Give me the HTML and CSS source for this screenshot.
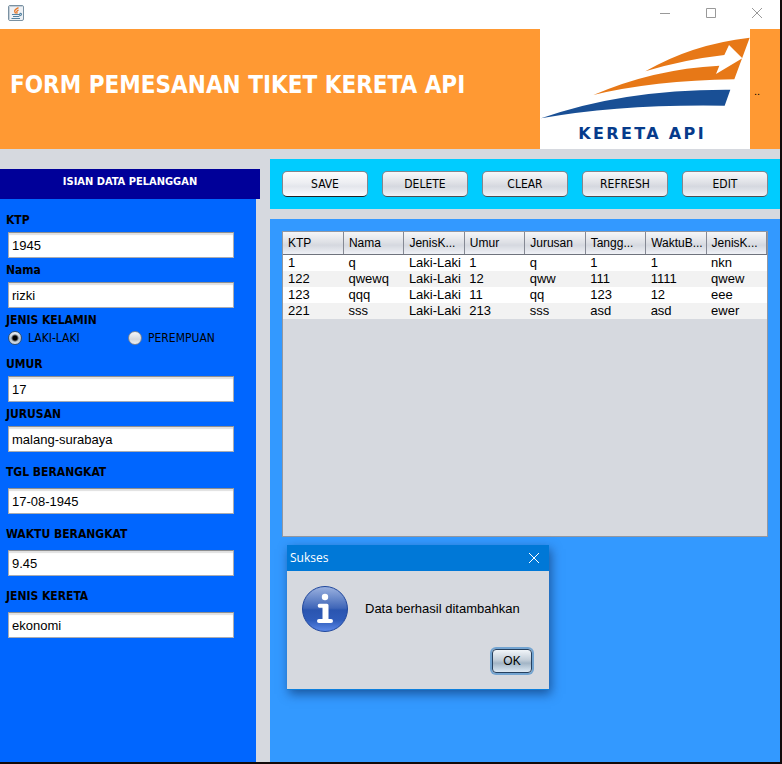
FILE: index.html
```html
<!DOCTYPE html>
<html lang="id">
<head>
<meta charset="utf-8">
<title>Form Pemesanan Tiket Kereta Api</title>
<link rel="stylesheet" href="styles.css">
</head>
<body>
<div class="window">
  <div class="titlebar">
    <svg class="java-icon" viewBox="0 0 16 16" aria-hidden="true">
      <rect x=".5" y=".5" width="15" height="15" rx="1.5" fill="#eef1f5" stroke="#7a91a2"/>
      <path d="M1.500 14V1.500h12.500" fill="none" stroke="#c3ced8"/>
      <path d="M10.500 2.600Q6 5 6.800 6.600Q7.400 7.600 7.400 8.400M10.600 5.200Q8.200 6 8.900 7.200Q9.200 7.800 8.600 8.600" fill="none" stroke="#e8792b" stroke-width="1.4"/>
      <path d="M4 9.500h8M5 11.500h6M3.500 13.500h8.500M11.500 8.600q2-.6 2 .6t-2.500 1.800" fill="none" stroke="#5382a1" stroke-width="1.2"/>
    </svg>
    <div class="window-controls">
      <button class="win-btn" type="button" aria-label="Minimize"><svg viewBox="0 0 10 10"><path d="M0 5.500h10"/></svg></button>
      <button class="win-btn" type="button" aria-label="Maximize"><svg viewBox="0 0 10 10"><path d="M.5.5h9v9h-9z"/></svg></button>
      <button class="win-btn" type="button" aria-label="Close"><svg viewBox="0 0 10 10"><path d="M0 0l10 10M10 0L0 10"/></svg></button>
    </div>
  </div>

  <header class="banner">
    <h1>FORM PEMESANAN TIKET KERETA API</h1>
    <svg class="logo" viewBox="0 0 630 360" role="img" aria-label="Kereta Api">
      <path fill="#e77817" d="M316 127Q455 46 629 26L583 151Q340 155 160 198Q340 120 538 110L528 135L607 88L567 48L553 78Q430 92 316 127Z"/>
      <path fill="#194f95" d="M3 268Q250 180 571 182L554 230Q240 225 3 268Z"/>
      <text class="logo-text" x="115" y="330">KERETA API</text>
    </svg>
    <span class="dots">..</span>
  </header>

  <main class="content">
    <section class="sidebar">
      <h2>ISIAN DATA PELANGGAN</h2>
      <form class="form">
        <div class="field"><label for="ktp">KTP</label><input id="ktp" type="text" value="1945"></div>
        <div class="field"><label for="nama">Nama</label><input id="nama" type="text" value="rizki"></div>
        <fieldset>
          <legend>JENIS KELAMIN</legend>
          <div class="radios">
            <label><input type="radio" name="jk" checked>LAKI-LAKI</label>
            <label><input type="radio" name="jk">PEREMPUAN</label>
          </div>
        </fieldset>
        <div class="field after-radios"><label for="umur">UMUR</label><input id="umur" type="text" value="17"></div>
        <div class="field"><label for="jurusan">JURUSAN</label><input id="jurusan" type="text" value="malang-surabaya"></div>
        <div class="field roomy"><label for="tgl">TGL BERANGKAT</label><input id="tgl" type="text" value="17-08-1945"></div>
        <div class="field roomy"><label for="waktu">WAKTU BERANGKAT</label><input id="waktu" type="text" value="9.45"></div>
        <div class="field roomy"><label for="kereta">JENIS KERETA</label><input id="kereta" type="text" value="ekonomi"></div>
      </form>
    </section>

    <div class="workspace">
      <div class="toolbar">
        <button class="btn hover" type="button">SAVE</button>
        <button class="btn" type="button">DELETE</button>
        <button class="btn" type="button">CLEAR</button>
        <button class="btn" type="button">REFRESH</button>
        <button class="btn" type="button">EDIT</button>
      </div>
      <section class="data-panel">
        <div class="table-frame">
          <table>
            <thead>
              <tr><th>KTP</th><th>Nama</th><th>JenisK...</th><th>Umur</th><th>Jurusan</th><th>Tangg...</th><th>WaktuB...</th><th>JenisK...</th></tr>
            </thead>
            <tbody>
              <tr><td>1</td><td>q</td><td>Laki-Laki</td><td>1</td><td>q</td><td>1</td><td>1</td><td>nkn</td></tr>
              <tr><td>122</td><td>qwewq</td><td>Laki-Laki</td><td>12</td><td>qww</td><td>111</td><td>1111</td><td>qwew</td></tr>
              <tr><td>123</td><td>qqq</td><td>Laki-Laki</td><td>11</td><td>qq</td><td>123</td><td>12</td><td>eee</td></tr>
              <tr><td>221</td><td>sss</td><td>Laki-Laki</td><td>213</td><td>sss</td><td>asd</td><td>asd</td><td>ewer</td></tr>
            </tbody>
          </table>
        </div>
        <div class="dialog" role="dialog" aria-labelledby="dialog-title">
          <div class="dialog-title">
            <span id="dialog-title">Sukses</span>
            <button class="dialog-close" type="button" aria-label="Close"><svg viewBox="0 0 10 10"><path d="M0 0l10 10M10 0L0 10"/></svg></button>
          </div>
          <div class="dialog-body">
            <svg class="info" viewBox="0 0 46 46" aria-hidden="true">
              <defs><linearGradient id="ball" x1="0" y1="0" x2="0" y2="1">
                <stop offset="0" stop-color="#9db3e0"/><stop offset=".48" stop-color="#3f66b8"/>
                <stop offset=".52" stop-color="#2a55b0"/><stop offset=".75" stop-color="#2f5cba"/><stop offset="1" stop-color="#5e8bea"/>
              </linearGradient></defs>
              <circle cx="23" cy="23" r="22.500" fill="url(#ball)" stroke="#20479c"/>
              <circle cx="23" cy="11" r="3.200" fill="#fff"/>
              <path d="M17.500 17.800h7.500q1.500 0 1.500 1.500V33h2.500q2 0 2 2t-2 2H17q-2 0-2-2t2-2h3.500V21.800h-3q-1.800 0-1.800-2t1.800-2z" fill="#fff"/>
            </svg>
            <p>Data berhasil ditambahkan</p>
          </div>
          <div class="dialog-actions"><button class="ok" type="button">OK</button></div>
        </div>
      </section>
    </div>
  </main>
</div>
</body>
</html>
```
FILE: styles.css
```css
* { box-sizing: border-box; }

body {
  margin: 0;
  font: 13px/16px "Liberation Sans", Arial, sans-serif;
  color: #000;
}

h1, h2, p, fieldset, legend { margin: 0; padding: 0; }
fieldset { border: 0; min-width: 0; }
button { padding: 0; color: #000; }

.window {
  display: flex;
  flex-direction: column;
  min-height: 100vh;
  background: #d6d9df;
  border-right: 2px solid #120a0a;
  border-bottom: 2px solid #120a0a;
}

.titlebar {
  display: flex;
  justify-content: space-between;
  align-items: center;
  height: 29px;
  padding: 0 0 3px 8px;
  background: #fff;
}
.java-icon { width: 16px; height: 16px; }
.window-controls { display: flex; }
.win-btn {
  width: 46px;
  height: 26px;
  border: 0;
  background: none;
}
.win-btn svg { display: block; width: 10px; height: 10px; margin: 0 auto; overflow: visible; }
.win-btn path { fill: none; stroke: #999; }

.banner {
  display: flex;
  height: 120px;
  background: #ff9933;
}
h1 {
  flex: 1;
  padding: 41px 0 0 10px;
  font: bold 24px/30px "DejaVu Sans Condensed", "DejaVu Sans", Tahoma, sans-serif;
  color: #fff;
  white-space: nowrap;
}
.logo { width: 210px; height: 120px; background: #fff; }
.logo-text {
  font: bold 48px "DejaVu Sans", Verdana, sans-serif;
  letter-spacing: 7px;
  fill: #063b8b;
}
.dots { width: 30px; padding: 54px 0 0 4px; font-size: 11px; }

.content {
  flex: 1;
  display: flex;
  gap: 10px;
  padding-top: 10px;
}

.sidebar {
  flex: 0 0 260px;
  min-width: 0;
  display: flex;
  flex-direction: column;
  padding-top: 10px;
  font-family: "DejaVu Sans Condensed", "DejaVu Sans", Tahoma, sans-serif;
  font-size: 12px;
}
h2 {
  height: 30px;
  padding-top: 5px;
  background: #000099;
  color: #fff;
  font-size: 11px;
  line-height: 16px;
  text-align: center;
}
.form {
  flex: 1;
  margin-right: 4px;
  padding: 13px 22px 24px 6px;
  background: #0066ff;
}
.field { display: flex; flex-direction: column; gap: 4px; margin-bottom: 4px; }
.field > label, legend { font-weight: bold; line-height: 16px; }
.field input {
  min-width: 0;
  height: 26px;
  margin-left: 2px;
  padding: 0 3px;
  border: 1px solid #a9acb2;
  border-top-color: #8d8e8f;
  border-radius: 0;
  background: #fff;
  box-shadow: inset 0 2px 1px #e0e0e0;
  font: 13px "Liberation Sans", Arial, sans-serif;
  color: #000;
}
.after-radios { margin-top: 8px; }
.roomy { gap: 8px; margin-top: 12px; }
.radios { display: flex; height: 20px; padding-left: 2px; }
.radios label { flex: 0 0 120px; display: flex; align-items: center; gap: 6px; }
.radios label:last-child { flex: 1; }
.radios input {
  appearance: none;
  width: 14px;
  height: 14px;
  margin: 0;
  border: 1px solid #7b8494;
  border-radius: 50%;
  background: linear-gradient(#f7f8fa, #d5d8de 60%, #eceff3);
}
.radios input:checked {
  border-color: #35506c;
  background: radial-gradient(circle, #000 2px, transparent 4px), linear-gradient(#eef2f6, #b4c1cd 55%, #d4dee8);
}

.workspace { flex: 1; display: flex; flex-direction: column; gap: 10px; min-width: 0; }
.toolbar {
  display: flex;
  gap: 14px;
  padding: 12px;
  background: #00ccff;
}
.btn {
  flex: 1;
  height: 26px;
  border: 1px solid #83868d;
  border-bottom-color: #4c4f55;
  border-radius: 5px;
  background: linear-gradient(#f7f8fa, #dfe1e6 45%, #d5d8df 60%, #eff1f6);
  font: 12px "DejaVu Sans Condensed", "DejaVu Sans", Tahoma, sans-serif;
}
.btn.hover {
  border-bottom-color: #222428;
  background: linear-gradient(#fcfdfe, #edeef2 45%, #e4e6ec 60%, #fbfcff);
}

.data-panel {
  position: relative;
  flex: 1;
  padding: 12px;
  background: #3399ff;
}
.table-frame {
  height: 306px;
  border: 1px solid #9297a1;
  background: #d6d9df;
}
table { width: 100%; table-layout: fixed; border-collapse: collapse; }
th, td {
  height: 16px;
  padding: 0 0 0 5px;
  font-weight: normal;
  line-height: 16px;
  text-align: left;
  white-space: nowrap;
}
th {
  height: 22px;
  border-right: 1px solid #858994;
  border-bottom: 1px solid #6f737d;
  background: linear-gradient(#f5f6f8, #dfe1e6 45%, #d5d8df 60%, #eff1f6);
  font-size: 12px;
}
tbody tr { background: #fff; }
tbody tr:nth-child(even) { background: #f2f2f2; }

.dialog {
  position: absolute;
  top: 326px;
  left: 17px;
  width: 262px;
  background: #d6d9df;
  border: 1px solid #0e7fdc;
  border-width: 0 0 1px;
  box-shadow: 2px 4px 10px rgba(0, 20, 60, .5);
}
.dialog-title {
  display: flex;
  justify-content: space-between;
  height: 26px;
  padding-left: 3px;
  background: #0078d7;
  color: #fff;
  font: 12px/25px "Open Sans", "Segoe UI", sans-serif;
}
.dialog-close { width: 30px; border: 0; background: none; }
.dialog-close svg { display: block; width: 10px; height: 10px; margin: 0 auto; overflow: visible; }
.dialog-close path { stroke: #fff; }
.dialog-body { display: flex; align-items: center; gap: 17px; padding: 15px 15px 0; }
.info { width: 46px; height: 46px; }
.dialog-actions { display: flex; justify-content: flex-end; padding: 17px 17px 16px; }
.ok {
  width: 40px;
  height: 24px;
  border: 1px solid #26405e;
  border-radius: 4px;
  background: linear-gradient(#f1f5f9, #c3ced9 45%, #a3b5c6 60%, #dde9f4);
  box-shadow: 0 0 0 2px #73a4d1;
  font: 12px "Liberation Sans", Arial, sans-serif;
}
```
